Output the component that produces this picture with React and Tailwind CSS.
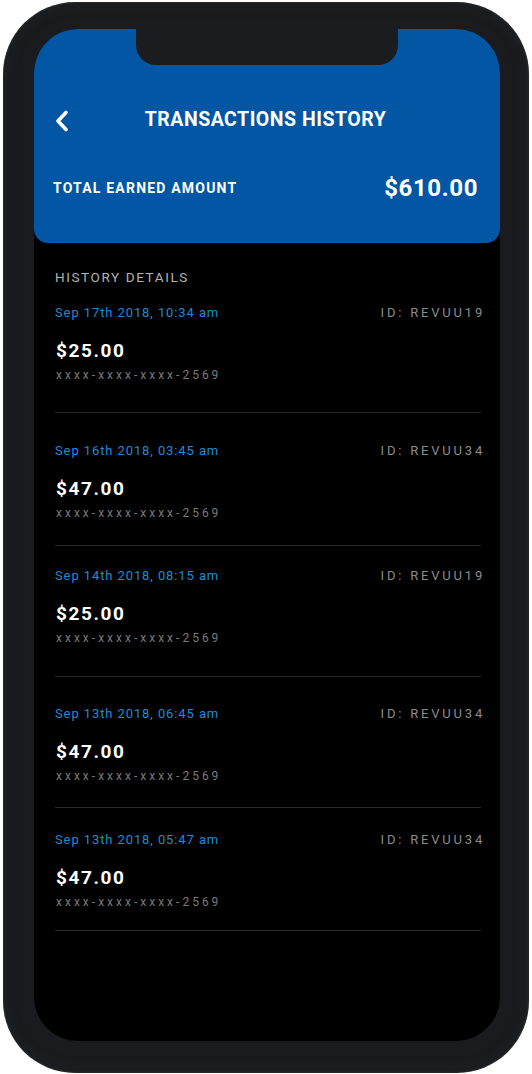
import React from "react";

const rows = [
  { date: "Sep 17th 2018, 10:34 am", id: "ID: REVUU19", amount: "$25.00", pt: "pt-[20px]", pb: "pb-[29px]" },
  { date: "Sep 16th 2018, 03:45 am", id: "ID: REVUU34", amount: "$47.00", pt: "pt-[30px]", pb: "pb-[24px]" },
  { date: "Sep 14th 2018, 08:15 am", id: "ID: REVUU19", amount: "$25.00", pt: "pt-[22px]", pb: "pb-[30px]" },
  { date: "Sep 13th 2018, 06:45 am", id: "ID: REVUU34", amount: "$47.00", pt: "pt-[29px]", pb: "pb-[23px]" },
  { date: "Sep 13th 2018, 05:47 am", id: "ID: REVUU34", amount: "$47.00", pt: "pt-[24px]", pb: "pb-[20px]" },
];

export default function App() {
  return (
    <div className="w-[532px] h-[1074px] bg-white pt-[2px] pl-[3px]" style={{ fontFamily: "Roboto, 'Liberation Sans', sans-serif" }}>
      <div className="w-[526px] h-[1071px] rounded-[72px] bg-[#191b1e] shadow-[inset_0_0_3px_rgba(255,255,255,0.1),inset_0_0_16px_rgba(50,54,60,0.3)] pl-[31px] pt-[27px]">
        <div className="relative w-[466px] h-[1012px] rounded-[44px] bg-black overflow-hidden">
          {/* notch */}
          <div className="absolute left-[102px] top-0 w-[262px] h-[36px] bg-[#1a1c1f] rounded-b-[20px]" />
          {/* header */}
          <div className="h-[214px] bg-[#0356a4] rounded-b-[14px] pl-[19px] pr-[22px]">
            <div className="pt-[78px] relative h-[104px] flex items-end">
              <div className="h-[26px] w-full flex items-center justify-center relative">
                <svg className="absolute left-[2px] top-[3px]" width="14" height="22" viewBox="0 0 14 22" fill="none">
                  <polyline points="11,2.5 3,11 11,19.5" stroke="white" strokeWidth="3.6" strokeLinecap="round" strokeLinejoin="round" />
                </svg>
                <span className="text-white font-bold text-[19.5px] tracking-[0.5px] leading-[26px]">TRANSACTIONS HISTORY</span>
              </div>
            </div>
            <div className="mt-[40px] h-[30px] flex items-center justify-between">
              <span className="text-white font-bold text-[14px] tracking-[1.2px]">TOTAL EARNED AMOUNT</span>
              <span className="text-white font-bold text-[24px] tracking-[0.6px]">$610.00</span>
            </div>
          </div>
          {/* body */}
          <div className="pl-[21px] pr-[19px] pt-[26px]">
            <div className="text-[#b3b3b3] text-[13.5px] tracking-[1.6px] leading-[16px]">HISTORY DETAILS</div>
            {rows.map((r, i) => (
              <div key={i} className={`${r.pt} ${r.pb} border-b border-[#2a2a2a]`}>
                <div className="flex items-center justify-between h-[16px]">
                  <span className="text-[#1d8bd8] text-[13px] font-normal tracking-[0.9px] leading-[16px]">{r.date}</span>
                  <span className="text-[#8c8c8c] text-[13px] tracking-[2.8px] leading-[16px] -mr-[4px]">{r.id}</span>
                </div>
                <div className="mt-[18px] h-[24px] flex items-center text-white font-bold text-[19px] tracking-[1.6px] pl-[1px]">{r.amount}</div>
                <div className="mt-[4px] h-[16px] flex items-center text-[#7a7a7a] text-[12px] tracking-[3px] pl-[1px]">xxxx-xxxx-xxxx-2569</div>
              </div>
            ))}
          </div>
        </div>
      </div>
    </div>
  );
}
